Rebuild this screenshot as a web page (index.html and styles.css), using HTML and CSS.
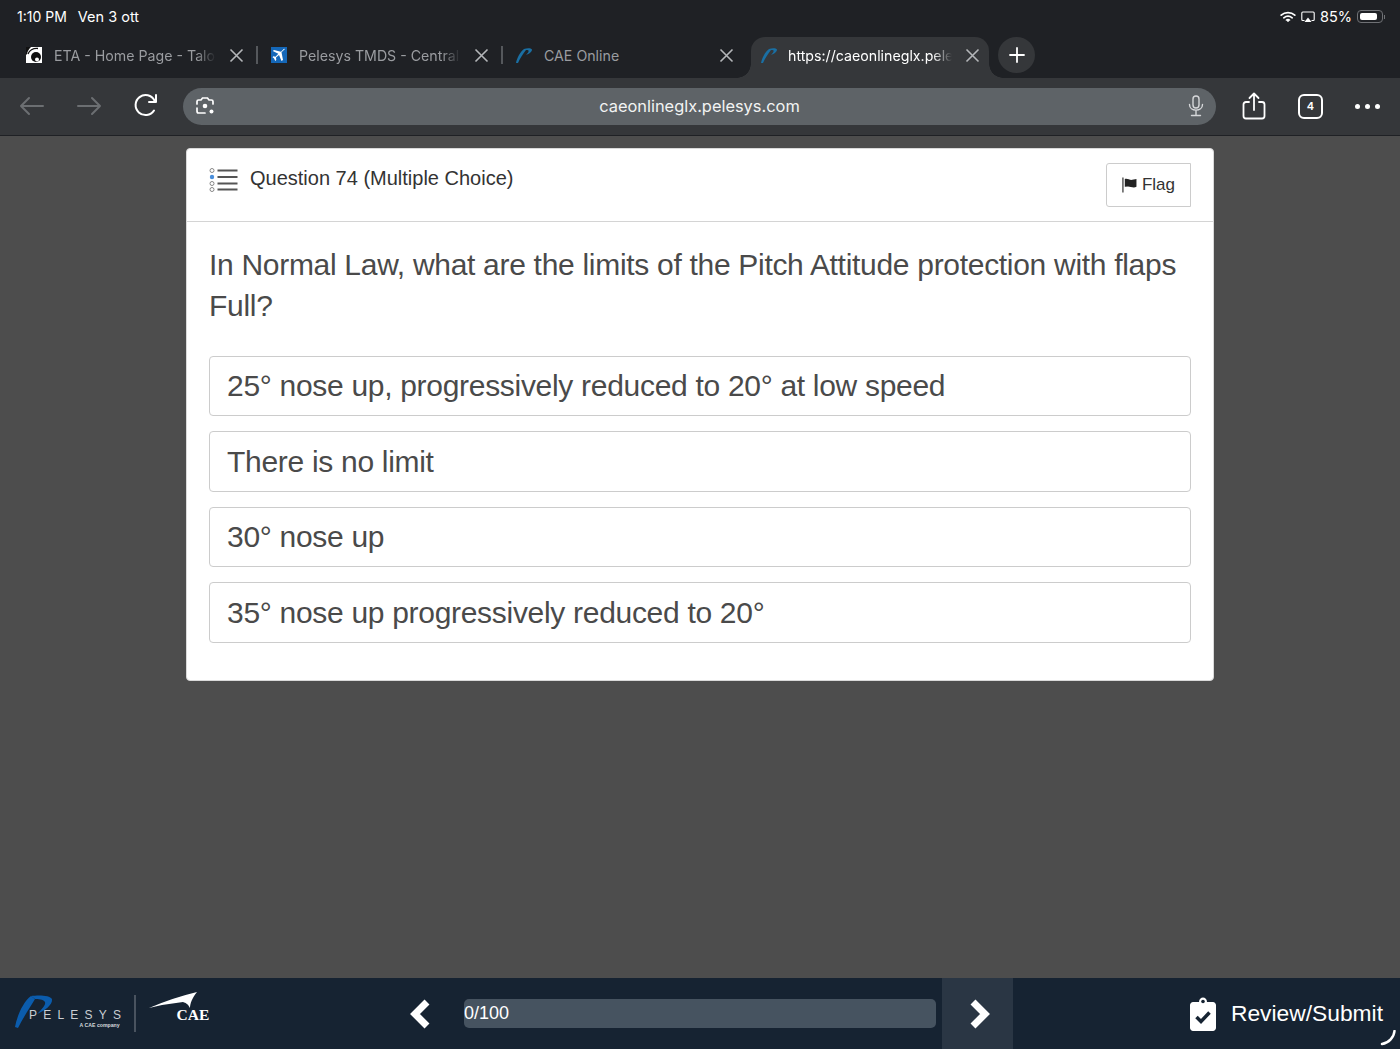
FILE: index.html
```html
<!DOCTYPE html>
<html lang="en">
<head>
    <meta charset="UTF-8">
    <meta name="viewport" content="width=device-width, initial-scale=1.0">
    <title>CAE Online</title>
    <link rel="stylesheet" href="styles.css">
</head>
<body>
    <header class="browser">
        <div class="status">
            <span class="status-time">1:10 PM</span>
            <span class="status-date">Ven 3 ott</span>
            <div class="status-right">
                <svg width="16" height="12" viewBox="0 0 16 12" fill="none" stroke="#fff" stroke-width="1.7" stroke-linecap="round"><path d="M1.2 4.2C5 .8 11 .8 14.800 4.200"/><path d="M3.800 6.800C6.300 4.800 9.700 4.800 12.200 6.800"/><circle cx="8" cy="9.800" r="1.100" fill="#fff" stroke="none"/><path d="M6.300 9.100C7.300 8.400 8.700 8.400 9.700 9.100" stroke-width="1.300"/></svg>
                <svg width="14" height="12" viewBox="0 0 14 12" fill="none"><path d="M3.500 9.500H1.800C1.200 9.500.8 9.100.8 8.500V2C.8 1.400 1.200 1 1.800 1H12.200C12.800 1 13.200 1.400 13.200 2V8.500C13.200 9.100 12.800 9.500 12.200 9.500H10.500" stroke="#fff" stroke-width="1.100"/><path d="M7 6.500L10.500 11H3.500Z" fill="#fff"/></svg>
                <span class="status-pct">85%</span>
                <span class="battery"><span class="battery-fill"></span></span>
                <span class="battery-tip"></span>
            </div>
        </div>

        <nav class="tabs">
            <div class="tab tab-sep">
                <svg class="favicon" viewBox="0 0 16 16"><rect width="16" height="16" fill="#fff"/><path d="M0 0H5C3 2 1.500 4 1 7L0 8Z" fill="#111"/><path d="M2 7C3 3.500 7 1 12 1.500" stroke="#111" stroke-width="1.300" fill="none"/><circle cx="10" cy="10" r="5" fill="#111"/><circle cx="11" cy="12.500" r="2" fill="#fff"/></svg>
                <span class="tab-title">ETA - Home Page - Talo</span>
                <svg class="tab-close" viewBox="0 0 15 15"><path d="M1.500 1.500L13.500 13.500M13.500 1.500L1.500 13.500"/></svg>
            </div>
            <div class="tab tab-sep">
                <svg class="favicon" viewBox="0 0 16 16"><rect width="16" height="16" fill="#1467b8"/><path d="M14 2L10.500 5.200 12 13 10.500 14 8 8 5 10.500 5.300 13 4.300 14 2.900 11.300 1.500 10.200 2.300 9.300 4.500 9.800 7.300 6.800 1.800 4 3 3 10 4.700 13 1.800Z" fill="#fff"/></svg>
                <span class="tab-title">Pelesys TMDS - Central</span>
                <svg class="tab-close" viewBox="0 0 15 15"><path d="M1.500 1.500L13.500 13.500M13.500 1.500L1.500 13.500"/></svg>
            </div>
            <div class="tab">
                <svg class="favicon" viewBox="0 0 16 16"><path class="favicon-p" d="M0 16C1 11 4 5 8 2L10 3C7 7 4 11 2 16ZM8 2C11 1 15 1 16 2.500C16 5 13 7 10 8C12 6 13 4.500 12.500 3.500C12 3 11 3 10 3Z"/></svg>
                <span class="tab-title tab-title-full">CAE Online</span>
                <svg class="tab-close" viewBox="0 0 15 15"><path d="M1.500 1.500L13.500 13.500M13.500 1.500L1.500 13.500"/></svg>
            </div>
            <div class="tab tab-active">
                <svg class="favicon" viewBox="0 0 16 16"><path class="favicon-p" d="M0 16C1 11 4 5 8 2L10 3C7 7 4 11 2 16ZM8 2C11 1 15 1 16 2.500C16 5 13 7 10 8C12 6 13 4.500 12.500 3.500C12 3 11 3 10 3Z"/></svg>
                <span class="tab-title">https://caeonlineglx.pele</span>
                <svg class="tab-close" viewBox="0 0 15 15"><path d="M1.500 1.500L13.500 13.500M13.500 1.500L1.500 13.500"/></svg>
            </div>
            <div class="tab-new">
                <svg width="16" height="16" viewBox="0 0 16 16"><path d="M8 1V15M1 8H15" stroke="#fff" stroke-width="1.800" stroke-linecap="round"/></svg>
            </div>
        </nav>

        <div class="toolbar">
            <div class="tool">
                <svg width="26" height="20" viewBox="0 0 26 20" fill="none" stroke="#6c6f72" stroke-width="2" stroke-linecap="round" stroke-linejoin="round"><path d="M24 10H2M10 2L2 10 10 18"/></svg>
            </div>
            <div class="tool">
                <svg width="26" height="20" viewBox="0 0 26 20" fill="none" stroke="#6c6f72" stroke-width="2" stroke-linecap="round" stroke-linejoin="round"><path d="M2 10H24M16 2L24 10 16 18"/></svg>
            </div>
            <div class="tool">
                <svg width="26" height="26" viewBox="0 0 26 26" fill="none" stroke="#fff" stroke-width="2" stroke-linecap="round" stroke-linejoin="round"><path d="M21 17.500A10 10 0 1 1 21.500 7.500"/><path d="M23 2V9H16"/></svg>
            </div>
            <div class="omnibar">
                <svg class="omni-lens" width="20" height="20" viewBox="0 0 20 20" fill="none" stroke="#fff" stroke-width="1.700" stroke-linecap="round"><path d="M2 8V5.500C2 4.500 2.700 4 3.500 4H6L7.500 2H12.500L14 4H16.500C17.300 4 18 4.500 18 5.500V8M2 12V15C2 16 2.700 17 3.500 17H10"/><circle cx="10" cy="10" r="2.300" fill="#fff" stroke="none"/><circle cx="16.500" cy="15.500" r="2" fill="#fff" stroke="none"/></svg>
                <span class="omni-url">caeonlineglx.pelesys.com</span>
                <svg class="omni-mic" width="16" height="22" viewBox="0 0 16 22" fill="none" stroke="#d5d7d9" stroke-width="1.400" stroke-linecap="round"><rect x="5" y="1" width="6" height="12" rx="3"/><path d="M1.500 9.500C1.500 17 14.500 17 14.500 9.500M8 16V20.500M3.500 20.500H12.500"/></svg>
            </div>
            <div class="tool tool-first-right">
                <svg width="24" height="28" viewBox="0 0 24 28" fill="none" stroke="#fff" stroke-width="1.800" stroke-linecap="round" stroke-linejoin="round"><path d="M7 10H4C2.500 10 1.500 11 1.500 12.500V24C1.500 25.500 2.500 26.500 4 26.500H20C21.500 26.500 22.500 25.500 22.500 24V12.500C22.500 11 21.500 10 20 10H17M12 18V1.500M7.500 6L12 1.500 16.500 6"/></svg>
            </div>
            <div class="tool">
                <span class="tab-count">4</span>
            </div>
            <div class="tool tool-more">
                <span class="dot"></span><span class="dot"></span><span class="dot"></span>
            </div>
        </div>
    </header>

    <main class="content">
        <section class="card">
            <div class="card-head">
                <div class="card-title">
                    <svg width="29" height="25" viewBox="0 0 29 25" fill="none">
                        <circle cx="3" cy="3.500" r="2" stroke="#888"/>
                        <circle cx="3" cy="10" r="2.200" fill="#4a8fdc"/>
                        <circle cx="3" cy="16.500" r="2" stroke="#888"/>
                        <circle cx="3" cy="22.500" r="2" stroke="#888"/>
                        <path d="M8.500 3.500H28.500M8.500 10H28.500M8.500 16.500H28.500M8.500 22.500H28.500" stroke="#555" stroke-width="2.200"/>
                    </svg>
                    <span>Question 74 (Multiple Choice)</span>
                </div>
                <button class="flag-btn">
                    <svg width="16" height="16" viewBox="0 0 16 16"><path d="M1 0V16" stroke="#222" stroke-width="1.200"/><path d="M3 1.500C6 .5 8 3 11 2.500L15.500 1.500V10C12 11.500 9 9.500 6.500 9.500L3 10Z" fill="#222"/></svg>
                    Flag
                </button>
            </div>
            <div class="card-body">
                <p class="question">In Normal Law, what are the limits of the Pitch Attitude protection with flaps Full?</p>
                <div class="answer">25° nose up, progressively reduced to 20° at low speed</div>
                <div class="answer">There is no limit</div>
                <div class="answer">30° nose up</div>
                <div class="answer">35° nose up progressively reduced to 20°</div>
            </div>
        </section>
    </main>

    <footer class="footer">
        <svg class="brand" width="396" height="71" viewBox="0 0 396 71">
            <path d="M15 49C17 38 23 24 31 18L35 21C31 28 24 38 18 50Z" fill="#0b5cad"/>
            <path d="M31 18C38 17 50 17 52 21C53 27 44 33 37 36C42 31 46 27 45 24C43 21 38 21 35 21Z" fill="#0b5cad"/>
            <text class="brand-name" x="29" y="41">PELESYS</text>
            <text class="brand-sub" x="79.500" y="48.500">A CAE company</text>
            <path d="M135 17V54" stroke="#7c848c"/>
            <path d="M149 30Q172 20 197 14C192 20 190 26 190 30C188 26 186 25 183 24Q165 26 149 30Z" fill="#fff"/>
            <text class="brand-cae" x="176.500" y="42">CAE</text>
        </svg>
        <div class="pager">
            <svg width="24" height="32" viewBox="0 0 24 32"><path d="M18 4L6 16 18 28" fill="none" stroke="#fff" stroke-width="7"/></svg>
        </div>
        <div class="progress">0/100</div>
        <div class="pager pager-next">
            <svg width="24" height="32" viewBox="0 0 24 32"><path d="M7 4L19 16 7 28" fill="none" stroke="#fff" stroke-width="7"/></svg>
        </div>
        <div class="review">
            <svg width="26" height="34" viewBox="0 0 26 34"><path d="M3 5H9C9 2 11 .5 13 .5S17 2 17 5H23C24.500 5 26 6.500 26 8V31C26 32.500 24.500 34 23 34H3C1.500 34 0 32.500 0 31V8C0 6.500 1.500 5 3 5Z" fill="#fff"/><circle cx="13" cy="4.500" r="1.800" fill="#162332"/><path d="M6.500 20L11 24.500 19.500 15.500" fill="none" stroke="#162332" stroke-width="3.500"/></svg>
            <span>Review/Submit</span>
        </div>
        <svg class="corner" width="16" height="16" viewBox="0 0 16 16"><path d="M14.500 1C14 7 9 13 2 14" fill="none" stroke="#fff" stroke-width="2.500" stroke-linecap="round"/></svg>
    </footer>
</body>
</html>
```

FILE: styles.css
```css
* {
box-sizing: border-box;
}

html, body {
height: 100%;
}

body {
display: flex;
flex-direction: column;
margin: 0;
background-color: #4d4d4d;
font-family: 'Liberation Sans', Arial, sans-serif;
overflow: hidden;
}

.browser {
font-family: 'Inter', sans-serif;
color: #fff;
background-color: #1f2125;
}

.status {
display: flex;
align-items: center;
height: 37px;
padding: 0 15px 4px 17px;
font-size: 14px;
}

.status-time {
margin-right: 11px;
}

.status-date {
font-size: 14.500px;
}

.status-right {
display: flex;
align-items: center;
gap: 5px;
margin-left: auto;
}

.status-pct {
font-size: 14.500px;
}

.battery {
display: flex;
width: 26px;
height: 13px;
padding: 2px;
border: 1px solid #6f7175;
border-radius: 4px;
}

.battery-fill {
width: 85%;
background-color: #fff;
border-radius: 2px;
}

.battery-tip {
width: 1px;
height: 4px;
margin-left: -4px;
background-color: #6f7175;
}

.tabs {
display: flex;
align-items: stretch;
height: 41px;
padding-left: 12px;
}

.tab {
position: relative;
display: flex;
align-items: center;
width: 245px;
padding: 0 13px 5px 14px;
color: #9a9ca0;
font-size: 14.200px;
}

.tab-sep::after {
content: "";
position: absolute;
right: -1px;
top: 9px;
width: 2px;
height: 18px;
background-color: #55585c;
}

.favicon {
flex: none;
width: 16px;
height: 16px;
margin-right: 12px;
}

.favicon-p {
fill: #1a6fa3;
}

.tab-title {
flex: 1;
overflow: hidden;
white-space: nowrap;
-webkit-mask-image: linear-gradient(to right, #000 88%, transparent);
mask-image: linear-gradient(to right, #000 88%, transparent);
}

.tab-title-full {
-webkit-mask-image: none;
mask-image: none;
}

.tab-close {
flex: none;
width: 15px;
height: 15px;
margin-left: 13px;
fill: none;
stroke: #b4b6b9;
stroke-width: 1.600;
}

.tab-active {
width: 238px;
margin-left: 4px;
padding: 0 9px 5px 10px;
color: #fff;
background-color: #35373a;
border-radius: 14px 14px 0 0;
}

.tab-active::before,
.tab-active::after {
content: "";
position: absolute;
bottom: 0;
width: 14px;
height: 14px;
}

.tab-active::before {
left: -14px;
background: radial-gradient(circle at 0 0, transparent 13.500px, #35373a 14px);
}

.tab-active::after {
right: -14px;
background: radial-gradient(circle at 100% 0, transparent 13.500px, #35373a 14px);
}

.tab-active .favicon {
margin-right: 11px;
}

.tab-new {
display: flex;
align-items: center;
justify-content: center;
width: 37px;
height: 36px;
margin-left: 9px;
background-color: #35373a;
border-radius: 50%;
}

.toolbar {
display: flex;
align-items: center;
height: 58px;
padding: 0 4px 1px 4px;
background-color: #35373a;
border-bottom: 1px solid #1f2125;
}

.tool {
display: flex;
align-items: center;
justify-content: center;
width: 57px;
height: 100%;
}

.tool-first-right {
margin-left: 9px;
}

.tool-more {
gap: 5px;
}

.dot {
width: 5px;
height: 5px;
background-color: #fff;
border-radius: 50%;
}

.tab-count {
display: flex;
align-items: center;
justify-content: center;
width: 25px;
height: 25px;
border: 2px solid #fff;
border-radius: 6px;
font-size: 11px;
font-weight: 600;
}

.omnibar {
display: grid;
grid-template-columns: 1fr auto 1fr;
align-items: center;
width: 1034px;
height: 37px;
margin-left: 8px;
padding: 0 12px;
background-color: #5e6367;
border-radius: 19px;
}

.omni-url {
font-size: 16.400px;
color: #f2f3f3;
}

.omni-mic {
justify-self: end;
}

.content {
flex: 1;
min-height: 0;
padding-top: 12px;
}

.card {
width: 1028px;
margin-left: 186px;
background-color: #fff;
border: 1px solid #d9d9d9;
border-radius: 4px;
color: #4a4a4a;
}

.card-head {
display: flex;
justify-content: space-between;
height: 73px;
padding: 14px 22px 0;
border-bottom: 1px solid #d4d4d4;
color: #333;
}

.card-title {
display: flex;
align-items: flex-start;
gap: 12px;
font-size: 20px;
line-height: 30px;
}

.card-title svg {
margin-top: 4px;
}

.flag-btn {
display: flex;
align-items: center;
gap: 5px;
width: 85px;
height: 44px;
padding: 0 15px;
background-color: #fff;
border: 1px solid #ccc;
border-radius: 3px 0 0 3px;
color: #333;
font-family: inherit;
font-size: 17px;
}

.card-body {
padding: 22px 22px 22px;
}

.question {
margin: 0 0 29.500px;
font-size: 30px;
line-height: 41px;
letter-spacing: -0.3px;
}

.answer {
display: flex;
align-items: center;
height: 60.600px;
margin-bottom: 15px;
padding: 1px 17px 0;
border: 1px solid #ccc;
border-radius: 4px;
font-size: 30px;
letter-spacing: -0.3px;
}

.footer {
position: relative;
display: flex;
align-items: stretch;
height: 71px;
background-color: #162332;
color: #fff;
}

.brand {
flex: none;
}

.brand-name {
font-family: 'Liberation Sans', sans-serif;
font-size: 12px;
letter-spacing: 6.200px;
fill: #c9ced3;
}

.brand-sub {
font-family: 'Liberation Sans', sans-serif;
font-size: 5.200px;
font-weight: 700;
fill: #d5d9dd;
}

.brand-cae {
font-family: 'Liberation Serif', serif;
font-size: 15.500px;
font-weight: 700;
fill: #fff;
}

.pager {
display: flex;
align-items: center;
justify-content: center;
width: 50px;
margin-right: 18px;
}

.progress {
width: 472px;
height: 29px;
align-self: center;
background-color: #465360;
border-radius: 5px;
font-size: 18px;
line-height: 29px;
}

.pager-next {
width: 71px;
margin: 0 0 0 6px;
background-color: #2a3644;
}

.review {
display: flex;
align-items: center;
gap: 15px;
margin-left: auto;
padding-right: 17px;
font-size: 22.800px;
}

.corner {
position: absolute;
right: 4px;
bottom: 3px;
}
```
